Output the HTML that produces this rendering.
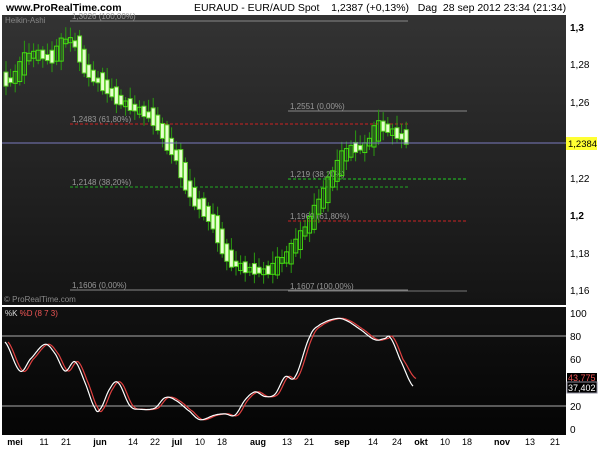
<!DOCTYPE html>
<html><head><meta charset="utf-8"><style>
body{margin:0;width:600px;height:450px;background:#fff;overflow:hidden;font-family:"Liberation Sans",sans-serif;position:relative}
.t{position:absolute;font-size:10px;white-space:nowrap}
</style></head><body>
<div class="t" style="left:6px;top:2px;font-weight:bold;font-size:10.5px">www.ProRealTime.com</div>
<div class="t" style="left:194px;top:2px;font-size:10.5px">EURAUD - EUR/AUD Spot &nbsp;&nbsp;&nbsp;1,2387 (+0,13%) &nbsp;&nbsp;Dag &nbsp;28 sep 2012 23:34 (21:34)</div>
<svg id="s" width="600" height="450" style="position:absolute;left:0;top:0" font-family="Liberation Sans, sans-serif">
<defs><linearGradient id="g" x1="0" y1="0" x2="0" y2="1"><stop offset="0" stop-color="#333"/><stop offset="1" stop-color="#141414"/></linearGradient>
<linearGradient id="g2" x1="0" y1="0" x2="0" y2="1"><stop offset="0" stop-color="#111"/><stop offset="1" stop-color="#050505"/></linearGradient></defs>
<rect x="2" y="15" width="564" height="290" fill="url(#g)"/>
<rect x="2" y="307" width="564" height="128" fill="url(#g2)"/>
<text x="5" y="23" fill="#888" font-size="8">Heikin-Ashi</text>
<text x="4" y="302" fill="#888" font-size="8">© ProRealTime.com</text>
<g font-size="8" fill="#999">
<line x1="70" y1="21" x2="408" y2="21" stroke="#888"/><text x="72" y="19">1,3026 (100,00%)</text>
<line x1="288" y1="111" x2="467" y2="111" stroke="#888"/><text x="290" y="109">1,2551 (0,00%)</text>
<line x1="70" y1="124" x2="408" y2="124" stroke="#c22" stroke-dasharray="3,2"/><text x="72" y="122">1,2483 (61,80%)</text>
<line x1="288" y1="179" x2="467" y2="179" stroke="#2c2" stroke-dasharray="3,2"/><text x="290" y="177">1,219 (38,20%)</text>
<line x1="70" y1="187" x2="408" y2="187" stroke="#2a2" stroke-dasharray="3,2"/><text x="72" y="185">1,2148 (38,20%)</text>
<line x1="288" y1="221" x2="467" y2="221" stroke="#c22" stroke-dasharray="3,2"/><text x="290" y="219">1,1969 (61,80%)</text>
<line x1="70" y1="290" x2="408" y2="290" stroke="#888"/><text x="72" y="288">1,1606 (0,00%)</text>
<line x1="288" y1="291" x2="467" y2="291" stroke="#777"/><text x="290" y="289">1,1607 (100,00%)</text>
</g>
<g id="c"></g>
<line x1="2" y1="143" x2="566" y2="143" stroke="#7a7abf"/>
<line x1="2" y1="336" x2="566" y2="336" stroke="#aaa"/>
<line x1="2" y1="406" x2="566" y2="406" stroke="#aaa"/>
<text x="5" y="316" font-size="8" fill="#ddd">%K <tspan fill="#e55">%D (8 7 3)</tspan></text>
<polyline id="d" fill="none" stroke="#e04040" stroke-width="1.2"/>
<polyline id="k" fill="none" stroke="#fff" stroke-width="1.2"/>
<g font-size="10" fill="#000">
<text x="570" y="31" font-weight="bold">1,3</text><text x="570" y="68">1,28</text><text x="570" y="106">1,26</text>
<text x="570" y="182">1,22</text><text x="570" y="219" font-weight="bold">1,2</text><text x="570" y="257">1,18</text><text x="570" y="294">1,16</text>
<text x="570" y="317">100</text><text x="570" y="340">80</text><text x="570" y="363">60</text><text x="570" y="410">20</text><text x="570" y="433">0</text>
</g>
<rect x="566" y="137" width="31" height="13" fill="#ff3"/><text x="568" y="147" font-size="9.5">1,2384</text>
<rect x="567" y="373" width="30" height="9" fill="#000"/><text x="568" y="381" font-size="9" fill="#e55">43,775</text>
<rect x="567" y="382" width="30" height="11" fill="#000" stroke="#889"/><text x="568" y="391" font-size="9" fill="#fff">37,402</text>
<g font-size="9" fill="#000" text-anchor="middle" id="ax"></g>
</svg>
<script>
(function(){
var ns="http://www.w3.org/2000/svg",c=document.getElementById('c');
function el(n,a,p){var e=document.createElementNS(ns,n);for(var k in a)e.setAttribute(k,a[k]);(p||c).appendChild(e);return e}
var P=[[5,75],[12,85],[20,70],[30,55],[45,55],[55,60],[62,45],[68,40],[75,40],[80,50],[90,75],[100,80],[110,90],[120,100],[130,105],[140,110],[150,115],[160,125],[170,145],[180,160],[190,190],[200,205],[210,215],[220,235],[230,260],[240,265],[250,270],[260,270],[270,272],[280,262],[290,255],[300,240],[310,225],[320,205],[330,185],[340,165],[350,150],[360,148],[370,145],[380,125],[390,130],[400,135],[410,140]];
function f(A,x){var n=A.length;if(x<=A[0][0])return A[0][1];for(var i=0;i<n-1;i++)if(x<=A[i+1][0]){var t=(x-A[i][0])/(A[i+1][0]-A[i][0]);
var p0=A[Math.max(i-1,0)][1],p1=A[i][1],p2=A[i+1][1],p3=A[Math.min(i+2,n-1)][1];
return 0.5*((2*p1)+(-p0+p2)*t+(2*p0-5*p1+4*p2-p3)*t*t+(-p0+3*p1-3*p2+p3)*t*t*t)}return A[n-1][1]}
var i=0;
for(var x=6;x<=410;x+=4.6){i++;var nz=((i*37)%11-5)*0.9;var a=f(P,x-4)+nz,b=f(P,x+4)-nz*0.5,tp=Math.min(a,b)-2,bt=Math.max(a,b)+2,up=b<a;
var xi=Math.round(x);
el('line',{x1:x,y1:tp-4-(i*7%9),x2:x,y2:bt+4+(i*5%10),stroke:'#2a9a10'});
el('rect',{x:x-2,y:tp,width:4,height:Math.max(bt-tp,3),fill:up?'none':'#e8ffd0',stroke:up?'#44dd10':'#55cc22','stroke-width':1});}
var K=[[5,75],[20,50],[30,60],[45,73],[55,65],[65,50],[75,58],[85,40],[95,18],[100,17],[110,35],[118,40],[130,20],[140,17],[155,18],[165,27],[175,25],[190,15],[200,8],[215,12],[225,13],[235,12],[245,25],[255,32],[265,28],[275,30],[285,45],[295,45],[310,80],[320,90],[335,95],[345,94],[360,86],[375,77],[385,78],[390,79],[400,60],[413,37]];
var kp=[],dp=[];for(var x=5;x<=413;x+=1){kp.push(x+','+(429-f(K,x)*1.16).toFixed(1));var xd=x+3;if(xd<=416)dp.push(xd+','+(429-(x>=400?f(K,x)+(x-400)*0.5:f(K,x))*1.16).toFixed(1));}
document.getElementById('k').setAttribute('points',kp.join(' '));
document.getElementById('d').setAttribute('points',dp.join(' '));
var L=[['mei',15,1],['11',44],['21',66],['jun',100,1],['14',133],['22',155],['jul',177,1],['10',200],['18',222],['aug',258,1],['13',287],['21',309],['sep',342,1],['14',373],['24',397],['okt',421,1],['10',445],['18',467],['nov',502,1],['13',530],['21',555]];
var ax=document.getElementById('ax');L.forEach(function(l){var t=el('text',{x:l[1],y:445},ax);if(l[2])t.setAttribute('font-weight','bold');t.textContent=l[0];});
})();
</script>
</body></html>
